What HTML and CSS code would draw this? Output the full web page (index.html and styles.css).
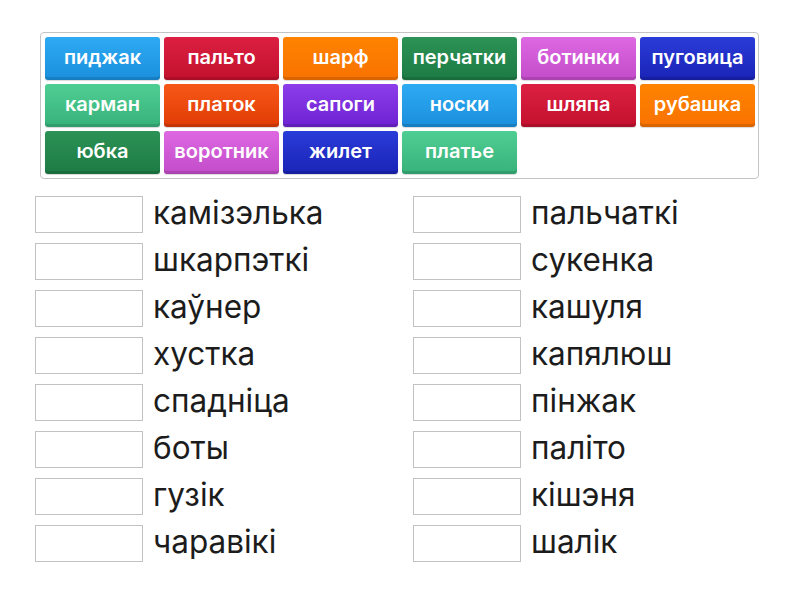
FILE: index.html
```html
<!DOCTYPE html>
<html lang="be">
<head>
<meta charset="utf-8">
<link rel="stylesheet" href="styles.css">
</head>
<body>
<div class="page">
  <div class="bank">
    <div class="tile blue">пиджак</div>
    <div class="tile red">пальто</div>
    <div class="tile orange">шарф</div>
    <div class="tile dgreen">перчатки</div>
    <div class="tile orchid">ботинки</div>
    <div class="tile dblue">пуговица</div>
    <div class="tile mint">карман</div>
    <div class="tile ored">платок</div>
    <div class="tile purple">сапоги</div>
    <div class="tile blue">носки</div>
    <div class="tile red">шляпа</div>
    <div class="tile orange">рубашка</div>
    <div class="tile dgreen">юбка</div>
    <div class="tile orchid">воротник</div>
    <div class="tile dblue">жилет</div>
    <div class="tile mint">платье</div>
  </div>
  <div class="lists">
    <div class="col">
      <div class="row"><div class="slot"></div><span class="word">камізэлька</span></div>
      <div class="row"><div class="slot"></div><span class="word">шкарпэткі</span></div>
      <div class="row"><div class="slot"></div><span class="word">каўнер</span></div>
      <div class="row"><div class="slot"></div><span class="word">хустка</span></div>
      <div class="row"><div class="slot"></div><span class="word">спадніца</span></div>
      <div class="row"><div class="slot"></div><span class="word">боты</span></div>
      <div class="row"><div class="slot"></div><span class="word">гузік</span></div>
      <div class="row"><div class="slot"></div><span class="word">чаравікі</span></div>
    </div>
    <div class="col">
      <div class="row"><div class="slot"></div><span class="word">пальчаткі</span></div>
      <div class="row"><div class="slot"></div><span class="word">сукенка</span></div>
      <div class="row"><div class="slot"></div><span class="word">кашуля</span></div>
      <div class="row"><div class="slot"></div><span class="word">капялюш</span></div>
      <div class="row"><div class="slot"></div><span class="word">пінжак</span></div>
      <div class="row"><div class="slot"></div><span class="word">паліто</span></div>
      <div class="row"><div class="slot"></div><span class="word">кішэня</span></div>
      <div class="row"><div class="slot"></div><span class="word">шалік</span></div>
    </div>
  </div>
</div>
</body>
</html>
```

FILE: styles.css
```css
html, body {
  margin: 0;
  padding: 0;
  background: #ffffff;
}
body {
  font-family: "Inter", "Noto Sans", sans-serif;
  color: #1a1a1a;
}
.page {
  padding-top: 32px;
}
.bank {
  margin-left: 40px;
  border: 1px solid #c4c4c4;
  border-radius: 4px;
  padding: 4px 3px 4px 4px;
  display: grid;
  grid-template-columns: repeat(6, 115px);
  grid-auto-rows: 43px;
  column-gap: 4px;
  row-gap: 4px;
  box-sizing: content-box;
  width: 710px;
}
.tile {
  border-radius: 3px;
  color: #ffffff;
  font-weight: 600;
  font-size: 20px;
  display: flex;
  align-items: center;
  justify-content: center;
  padding-bottom: 3px;
  box-sizing: border-box;
  box-shadow: inset 0 -3px 0 rgba(0,0,0,0.12), 0 1px 1px rgba(0,0,0,0.15);
  white-space: nowrap;
}
.blue   { background: linear-gradient(#2eaaf3, #1b8fdc); }
.red    { background: linear-gradient(#dc2042, #c3102d); }
.orange { background: linear-gradient(#ff8300, #f87200); }
.dgreen { background: linear-gradient(#2c9255, #1d7b44); }
.orchid { background: linear-gradient(#de68e2, #c24cc9); }
.dblue  { background: linear-gradient(#2a3cd8, #1a23b6); }
.mint   { background: linear-gradient(#4fce93, #37b27a); }
.ored   { background: linear-gradient(#f75818, #e03b04); }
.purple { background: linear-gradient(#8d3dea, #6e22d2); }

.lists {
  margin-top: 17px;
  margin-left: 35px;
  display: grid;
  grid-template-columns: 378px 378px;
}
.col {
  display: flex;
  flex-direction: column;
  gap: 10px;
}
.row {
  display: flex;
  align-items: center;
  height: 37px;
}
.slot {
  width: 106px;
  height: 35px;
  border: 1px solid #c2c2c2;
  background: #ffffff;
  flex: none;
}
.word {
  margin-left: 10px;
  font-size: 31.5px;
  font-weight: 400;
  color: #1c1c1c;
  line-height: 1;
  padding-bottom: 4px;
}
```
